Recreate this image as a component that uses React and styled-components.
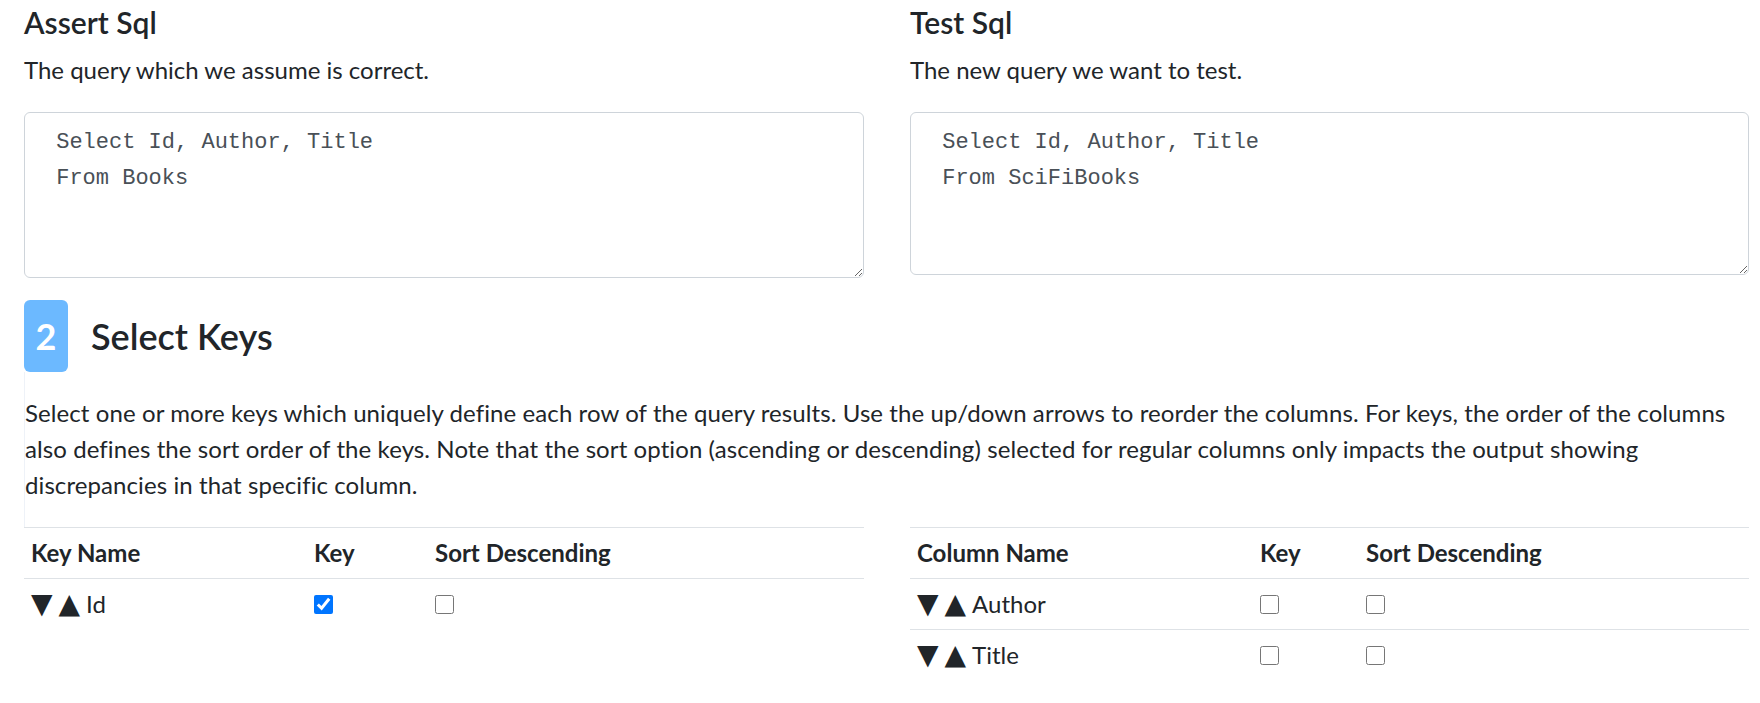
import React from 'react';
import styled, { createGlobalStyle } from 'styled-components';

const GlobalStyle = createGlobalStyle`
  * {
    box-sizing: border-box;
  }
  body {
    margin: 0;
    background: #fff;
    color: #212529;
    font-family: Lato, "Open Sans", sans-serif;
    font-size: 24px;
    line-height: 36px;
  }
`;

const Page = styled.div`
  padding: 4px 11px 0 24px;
`;

const Columns = styled.div`
  display: grid;
  grid-template-columns: 840px 839px;
  column-gap: 46px;
  align-items: start;
`;

const ColTitle = styled.h5`
  margin: 0 0 12px;
  font-size: 30px;
  font-weight: 600;
  line-height: 36px;
`;

const Lead = styled.p`
  margin: 0 0 24px;
`;

const SqlBox = styled.textarea`
  display: block;
  width: 100%;
  height: ${(p) => p.$h}px;
  margin: 0;
  padding: 12px 18px;
  font-family: "Liberation Mono", monospace;
  font-size: 22px;
  line-height: 36px;
  color: #495057;
  background: #fff;
  border: 1px solid #ced4da;
  border-radius: 6px;
  resize: vertical;
  outline: none;
`;

const StepHeader = styled.div`
  display: flex;
  align-items: center;
  gap: 23px;
  margin-top: 22px;
`;

const StepBadge = styled.span`
  display: flex;
  align-items: center;
  justify-content: center;
  width: 44px;
  height: 72px;
  border-radius: 6px;
  background: #6cb9ff;
  color: #fff;
  font-size: 36px;
  font-weight: 700;
`;

const StepTitle = styled.h4`
  margin: 0;
  font-size: 36px;
  font-weight: 600;
  line-height: 43px;
`;

const StepBody = styled.div`
  border-left: 1px solid #eef2f8;
  padding-top: 23px;
`;

const StepText = styled.p`
  margin: 0;
  padding-bottom: 24px;
  letter-spacing: 0.09px;
`;

const Table = styled.table`
  width: 100%;
  border-collapse: collapse;
`;

const Th = styled.th`
  width: ${(p) => p.$w}px;
  padding: 7px;
  text-align: left;
  font-weight: 700;
  border-top: 1px solid #dee2e6;
  border-bottom: 1px solid #dee2e6;
`;

const Td = styled.td`
  padding: 7px;
  border-top: 1px solid #dee2e6;
  vertical-align: top;
`;

const Arrow = styled.span`
  font-family: "DejaVu Sans", sans-serif;
  font-size: 28px;
  margin-right: 6px;
  cursor: pointer;
`;

const Check = styled.input.attrs({ type: 'checkbox' })`
  width: 19px;
  height: 19px;
  margin: 0;
  vertical-align: -1px;
`;

function ColumnTable({ title, rows, widths }) {
  return (
    <Table>
      <thead>
        <tr>
          <Th $w={widths[0]}>{title}</Th>
          <Th $w={widths[1]}>Key</Th>
          <Th $w={widths[2]}>Sort Descending</Th>
        </tr>
      </thead>
      <tbody>
        {rows.map((r) => (
          <tr key={r.name}>
            <Td>
              <Arrow>▼</Arrow>
              <Arrow>▲</Arrow>
              {r.name}
            </Td>
            <Td>
              <Check defaultChecked={r.key} />
            </Td>
            <Td>
              <Check defaultChecked={r.desc} />
            </Td>
          </tr>
        ))}
      </tbody>
    </Table>
  );
}

export default function App() {
  return (
    <Page>
      <GlobalStyle />
      <Columns>
        <div>
          <ColTitle>Assert Sql</ColTitle>
          <Lead>The query which we assume is correct.</Lead>
          <SqlBox
            $h={166}
            spellCheck={false}
            defaultValue={' Select Id, Author, Title\n From Books'}
          />
        </div>
        <div>
          <ColTitle>Test Sql</ColTitle>
          <Lead>The new query we want to test.</Lead>
          <SqlBox
            $h={163}
            spellCheck={false}
            defaultValue={' Select Id, Author, Title\n From SciFiBooks'}
          />
        </div>
      </Columns>

      <StepHeader>
        <StepBadge>2</StepBadge>
        <StepTitle>Select Keys</StepTitle>
      </StepHeader>

      <StepBody>
        <StepText>
          Select one or more keys which uniquely define each row of the query
          results. Use the up/down arrows to reorder the columns. For keys, the
          order of the columns also defines the sort order of the keys. Note
          that the sort option (ascending or descending) selected for regular
          columns only impacts the output showing discrepancies in that
          specific column.
        </StepText>
      </StepBody>

      <Columns>
        <ColumnTable
          title="Key Name"
          widths={[283, 121, 436]}
          rows={[{ name: 'Id', key: true, desc: false }]}
        />
        <ColumnTable
          title="Column Name"
          widths={[343, 106, 390]}
          rows={[
            { name: 'Author', key: false, desc: false },
            { name: 'Title', key: false, desc: false },
          ]}
        />
      </Columns>
    </Page>
  );
}
